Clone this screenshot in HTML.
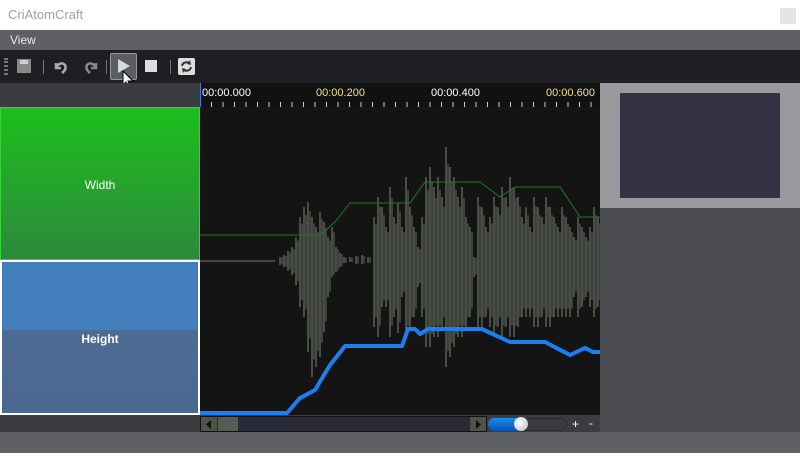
<!DOCTYPE html><html><head><style>
body{margin:0;width:800px;height:453px;overflow:hidden;background:#5f6064;font-family:"Liberation Sans",sans-serif;position:relative}
div{position:absolute;box-sizing:border-box}
</style></head><body>
<div style="left:0;top:0;width:800px;height:30px;background:#fff"><span style="position:absolute;left:8px;top:7px;font-size:13px;color:#a0a0a0">CriAtomCraft</span><div style="left:780px;top:8px;width:16px;height:16px;background:#e4e4e4"></div></div>
<div style="left:0;top:30px;width:800px;height:20px;background:#5f6064"><span style="position:absolute;left:10px;top:3px;font-size:12px;color:#e8e8e8">View</span></div>
<div style="left:0;top:50px;width:800px;height:33px;background:#1e1f22">
<div style="left:4px;top:8px;width:4px;height:17px;border-left:2px dotted #777;border-right:2px dotted #777"></div>
<div style="left:17px;top:9px;width:14px;height:14px;background:#888"><div style="left:3px;top:1px;width:8px;height:4px;background:#ccc"></div></div>
<div style="left:43px;top:10px;width:1px;height:14px;background:#777"></div>
<svg style="position:absolute;left:52px;top:9px" width="60" height="16"><path d="M4 4 L4 9 L9 9 M4 8 Q9 2 13 6 Q15 10 10 14" stroke="#aaa" stroke-width="2.5" fill="none"/><path d="M44 4 L44 9 L39 9 M44 8 Q39 2 35 6 Q33 10 38 14" stroke="#888" stroke-width="2.5" fill="none"/></svg>
<div style="left:106px;top:10px;width:1px;height:14px;background:#777"></div>
<div style="left:110px;top:3px;width:27px;height:27px;background:#5a5d63;border:1px solid #999;border-radius:2px"></div>
<svg style="position:absolute;left:116px;top:8px" width="16" height="16"><path d="M2 1 L14 8 L2 15Z" fill="#d8d8d8"/></svg>
<svg style="position:absolute;left:122px;top:20px" width="14" height="20"><path d="M1 1 L1 15 L4 12 L7 18 L9 17 L6 11 L11 11Z" fill="#fff" stroke="#000"/></svg>
<div style="left:145px;top:10px;width:12px;height:12px;background:#ddd"></div>
<div style="left:170px;top:10px;width:1px;height:14px;background:#777"></div>
<div style="left:178px;top:8px;width:17px;height:17px;background:#ddd;border-radius:2px"></div>
<svg style="position:absolute;left:178px;top:8px" width="17" height="17"><path d="M4 8 A4.5 4.5 0 0 1 12 6 M13 9 A4.5 4.5 0 0 1 5 11" stroke="#333" stroke-width="2" fill="none"/><path d="M12 2 L13 7 L9 6Z M5 15 L4 10 L8 11Z" fill="#333"/></svg>
</div>
<div style="left:0;top:83px;width:200px;height:24px;background:#3b3c40"></div>
<div style="left:0;top:107px;width:200px;height:153px;background:linear-gradient(#1ebe1e,#2c8a3a);border:1px solid #36d436"><span style="position:absolute;left:0;width:198px;top:70px;text-align:center;color:#fff;font-size:12px">Width</span></div>
<div style="left:0;top:260px;width:200px;height:155px;background:linear-gradient(#447fbd 0,#447fbd 45%,#4d6c93 45%,#4a6890);border:2px solid #fff"><span style="position:absolute;left:0;width:196px;top:70px;text-align:center;color:#fff;font-size:12px;font-weight:bold">Height</span></div>
<div style="left:0;top:415px;width:200px;height:17px;background:#3b3c40"></div>
<div style="left:200px;top:83px;width:400px;height:24px;background:#111;border-left:1px solid #3a7fd0;font-size:11px">
<span style="position:absolute;left:1px;top:4px;color:#fff">00:00.000</span>
<span style="position:absolute;left:115px;top:4px;color:#f0e08a">00:00.200</span>
<span style="position:absolute;left:230px;top:4px;color:#fff">00:00.400</span>
<span style="position:absolute;left:345px;top:4px;color:#f0e08a">00:00.600</span>
<div style="left:0;top:19px;width:400px;height:5px;background:repeating-linear-gradient(90deg,transparent 0,transparent 10px,#ccc 10px,#ccc 11px,transparent 11px,transparent 11.5px)"></div>
</div>
<div style="left:200px;top:107px;width:400px;height:308px;background:#141414;overflow:hidden">
<svg width="400" height="308" style="position:absolute;left:0;top:0">
<line x1="0" y1="154" x2="75" y2="154" stroke="#777" stroke-width="1"/>
<path id="w" stroke="#7a8575" stroke-width="1" fill="none" d="M80 150v8M84 148v12M88 144v20M92 140v28M96 130v48M100 110v90M104 100v110M108 95v150M112 110v160M116 120v140M120 105v145M124 115v110M128 130v60M132 120v50M136 140v25M140 146v14M144 150v6M150 150v5M156 149v8M162 148v9M168 150v6M174 110v110M178 90v140M182 100v100M186 120v80M190 80v150M194 110v100M198 96v130M202 120v70M206 70v160M210 100v120M214 120v90M218 140v40M222 110v100M226 70v170M230 60v180M234 80v150M238 70v160M242 90v130M246 40v220M250 60v190M254 70v170M258 90v140M262 80v150M266 110v110M270 120v90M274 150v20M278 90v130M282 100v120M286 120v90M290 110v110M294 90v140M298 100v120M302 80v150M306 90v130M310 70v160M314 80v150M318 90v130M322 110v100M326 100v110M330 120v90M334 90v130M338 100v120M342 110v100M346 90v130M350 100v120M354 110v100M358 120v90M362 100v110M366 110v100M370 120v90M374 130v60M378 110v100M382 120v80M386 130v60M390 120v80M394 100v110M398 110v90"/>
<use href="#w" x="2" transform="translate(0,154) scale(1,0.85) translate(0,-154)" opacity="0.8"/>
<polyline fill="none" stroke="#1f7a1f" stroke-width="1" points="0,128 120,128 135,115 150,96 210,96 225,75 280,75 300,90 315,80 360,80 380,110 400,110"/>
<polyline fill="none" stroke="#1a7ff0" stroke-width="4" points="0,306 87,306 100,291 115,283 130,258 145,239 202,239 208,222 215,222 220,227 228,222 282,222 310,235 345,235 370,248 385,241 393,245 400,245"/>
</svg></div>
<div style="left:200px;top:415px;width:400px;height:17px;background:#3b3c40"></div>
<div style="left:200px;top:416px;width:287px;height:16px;background:#282a38;border:1px solid #111"></div>
<div style="left:201px;top:417px;width:16px;height:14px;background:#4e544c"></div>
<svg style="position:absolute;left:205px;top:420px" width="8" height="9"><path d="M6 0L1 4.5L6 9Z" fill="#111"/></svg>
<div style="left:218px;top:417px;width:20px;height:14px;background:#555d52"></div>
<div style="left:470px;top:417px;width:16px;height:14px;background:#4e544c"></div>
<svg style="position:absolute;left:474px;top:420px" width="8" height="9"><path d="M2 0L7 4.5L2 9Z" fill="#111"/></svg>
<div style="left:488px;top:418px;width:79px;height:13px;background:#3a3b40;border:1px solid #2a2b30;border-radius:7px"></div>
<div style="left:488px;top:418px;width:36px;height:13px;background:linear-gradient(#1a8ef0,#0a4fb0);border-radius:7px 0 0 7px"></div>
<div style="left:514px;top:417px;width:14px;height:14px;background:radial-gradient(circle at 40% 40%,#fff,#bbb);border-radius:50%"></div>
<span style="position:absolute;left:572px;top:417px;color:#fff;font-size:12px">+</span>
<span style="position:absolute;left:589px;top:416px;color:#fff;font-size:12px">-</span>
<div style="left:600px;top:83px;width:200px;height:125px;background:#9a9a9e"><div style="left:20px;top:10px;width:160px;height:105px;background:#323244"></div></div>
<div style="left:600px;top:208px;width:200px;height:224px;background:#4a4b4f"></div>
</body></html>
